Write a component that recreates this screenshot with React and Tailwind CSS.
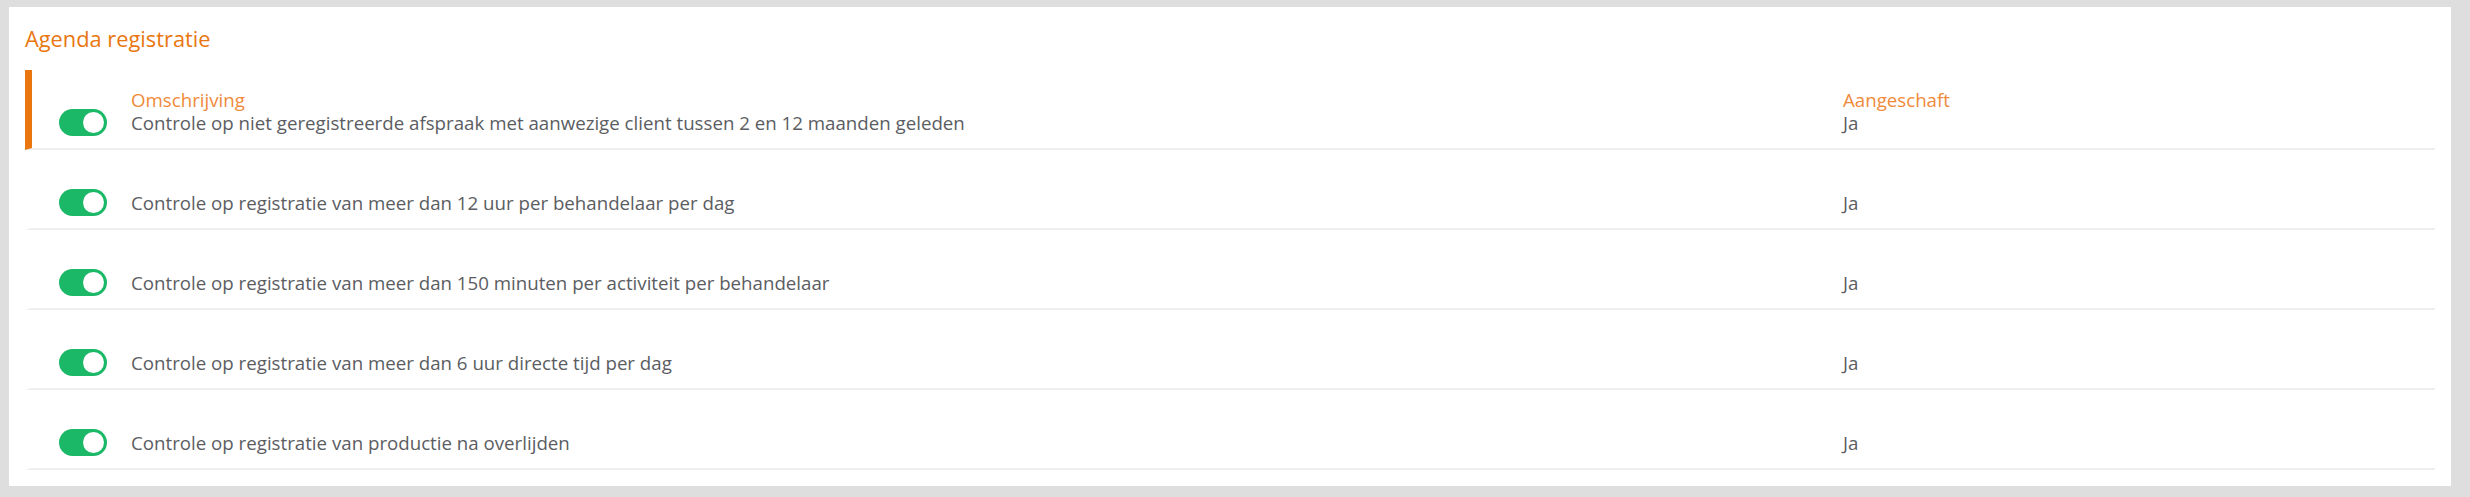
import { useState } from "react";

const rows = [
  { text: "Controle op niet geregistreerde afspraak met aanwezige client tussen 2 en 12 maanden geleden", value: "Ja", header: true },
  { text: "Controle op registratie van meer dan 12 uur per behandelaar per dag", value: "Ja" },
  { text: "Controle op registratie van meer dan 150 minuten per activiteit per behandelaar", value: "Ja" },
  { text: "Controle op registratie van meer dan 6 uur directe tijd per dag", value: "Ja" },
  { text: "Controle op registratie van productie na overlijden", value: "Ja" },
];

const Toggle = ({ on, onClick }) => (
  <button
    onClick={onClick}
    className={`flex items-center w-[48px] h-[27px] rounded-full px-[3px] shrink-0 ${
      on ? "bg-[#1bb868] justify-end" : "bg-[#c9c9c9] justify-start"
    }`}
  >
    <span className="block w-[21px] h-[21px] rounded-full bg-white" />
  </button>
);

const App = () => {
  const [enabled, setEnabled] = useState(rows.map(() => true));

  const flip = (i) => setEnabled((prev) => prev.map((v, j) => (j === i ? !v : v)));

  return (
    <div className="min-h-screen bg-[#dedede] pt-[7px] pl-[9px] pr-[19px] pb-[13px] font-['Open_Sans',sans-serif]">
      <div className="bg-white px-[16px] pt-[17px] pb-[16px]">
        {/* Title */}
        <h2 className="text-[21.8px] leading-[29px] text-[#e9760f] h-[46px]">Agenda registratie</h2>

        {/* Rows */}
        <ul>
          {rows.map((row, i) => (
            <li
              key={i}
              className={`flex items-end h-[80px] pb-[14px] border-b-2 border-[#eeeeee] ${
                i === 0 ? "border-l-[7px] border-l-[#e9760f]" : "border-l-[7px] border-l-transparent"
              }`}
            >
              <div className="ml-[27px] mb-[-2px]">
                <Toggle on={enabled[i]} onClick={() => flip(i)} />
              </div>
              <div className="ml-[24px] flex-1 text-[18.7px] leading-[23px]">
                {row.header && <div className="text-[#f08a3a]">Omschrijving</div>}
                <div className="text-[#5b5d62]">{row.text}</div>
              </div>
              <div className="w-[592px] text-[18.7px] leading-[23px]">
                {row.header && <div className="text-[#f08a3a]">Aangeschaft</div>}
                <div className="text-[#5b5d62]">{row.value}</div>
              </div>
            </li>
          ))}
        </ul>
      </div>
    </div>
  );
};

export default App;
